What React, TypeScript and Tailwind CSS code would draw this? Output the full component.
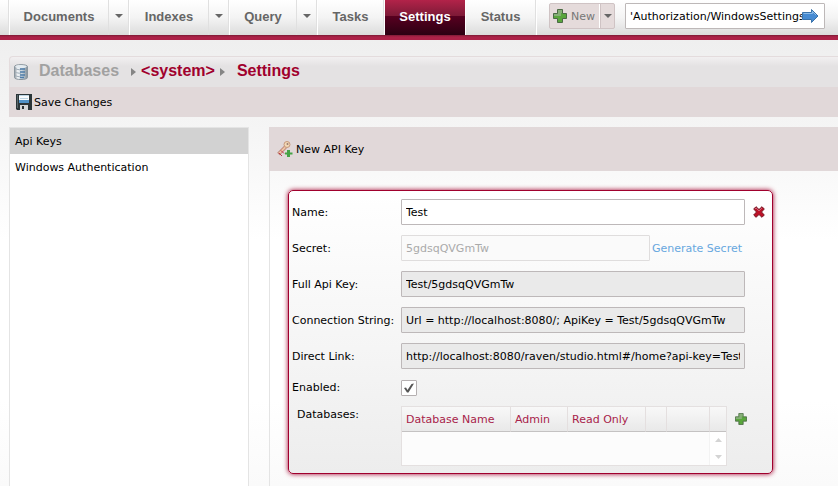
import { useState, type ReactNode } from "react";

function DownTriangle() {
  return (
    <svg width="8" height="4" viewBox="0 0 8 4" aria-hidden="true">
      <path d="M0 0h8L4 4z" fill="#666" />
    </svg>
  );
}

function Crumb() {
  return (
    <svg width="5" height="8" viewBox="0 0 5 8" aria-hidden="true">
      <path d="M0 0l5 4-5 4z" fill="#858585" />
    </svg>
  );
}

function PlusIcon({ size }: { size: number }) {
  return (
    <svg width={size} height={size} viewBox="0 0 14 14" aria-hidden="true">
      <path
        d="M4.5 .5h5v4h4v5h-4v4h-5v-4h-4v-5h4z"
        fill="#59a63c"
        stroke="#4b6b45"
      />
      <path d="M5 1h4v3H8v3H1V5h4z" fill="#a5b59e" opacity=".6" />
    </svg>
  );
}

function DatabaseIcon() {
  return (
    <svg width="14" height="16" viewBox="0 0 14 16" aria-hidden="true">
      <defs>
        <linearGradient id="drum">
          <stop offset="0" stopColor="#8e979e" />
          <stop offset=".25" stopColor="#f5f8fa" />
          <stop offset=".6" stopColor="#c3d0da" />
          <stop offset="1" stopColor="#828e97" />
        </linearGradient>
      </defs>
      <path
        d="M.5 2.500C.5 0 13.500 0 13.500 2.500v11c0 2.700-13 2.700-13 0z"
        fill="url(#drum)"
        stroke="#8b969e"
      />
      <ellipse cx="7" cy="2.600" rx="5.800" ry="1.600" fill="#e4ebf0" />
      <path
        d="M1 4.500c2 1 4 1.300 6 1.300M1 8c2 1 4 1.300 6 1.300M1 11.500c2 1 4 1.300 6 1.300"
        fill="none"
        stroke="#9fadb8"
      />
      <path d="M6 5h5M6 8h5M6 11h5M6 13.500h4" stroke="#4d7ca8" strokeWidth="1.500" />
    </svg>
  );
}

function SaveIcon() {
  return (
    <svg width="16" height="16" viewBox="0 0 16 16" aria-hidden="true">
      <path d="M0 0h16v16H1L0 15z" fill="#2b3538" />
      <path d="M1 1h1v13H1z" fill="#59676a" />
      <path d="M3 1h10v8H3z" fill="#f6fafc" />
      <path d="M3 1h10v1H3z" fill="#b9d2e2" />
      <path d="M4 4.500h8" stroke="#b9d2e2" />
      <path d="M3 6h10v3H3z" fill="#4f93c8" />
      <path d="M4 11h8v5H4z" fill="#d3d7d8" />
      <path d="M6 12h2v3H6z" fill="#273033" />
    </svg>
  );
}

function KeyIcon() {
  return (
    <svg width="16" height="16" viewBox="0 0 16 16" aria-hidden="true">
      <path d="M8.500 6L1.500 13" stroke="#b87a70" strokeWidth="3.500" />
      <path d="M8.500 6L2 12.500" stroke="#edc5a4" strokeWidth="2" />
      <path d="M2 12l3 3M4 9.500l3 3" stroke="#bd3348" />
      <circle cx="10" cy="3.500" r="3" fill="#f3d9b6" stroke="#c6987c" />
      <circle cx="10.500" cy="3" r="1" fill="#9a7b72" />
      <path d="M10 9h3v2.500h2.500v2H13V16h-3v-2.500H8v-2h2z" fill="#45a346" />
    </svg>
  );
}

function GoIcon() {
  return (
    <svg width="17" height="14" viewBox="0 0 17 14" aria-hidden="true">
      <path d="M.5 3.500h9v-3l6.500 6.500-6.500 6.500v-3h-9z" fill="#478bd2" stroke="#3972aa" />
      <path d="M1.500 4.500h9v-2L14 6" fill="none" stroke="#8dbce9" />
    </svg>
  );
}

function DeleteIcon() {
  return (
    <svg width="12" height="12" viewBox="0 0 12 12" aria-hidden="true">
      <path
        d="M3 .7L6 3.500 9 .7 11.300 3 8.500 6l2.800 3L9 11.300 6 8.500l-3 2.800L.7 9l2.800-3L.7 3z"
        fill="#bd1026"
        stroke="#761522"
      />
      <path d="M2 3l1-1 3 3 3-3" fill="none" stroke="#cf7488" opacity=".8" />
    </svg>
  );
}

function Tab({
  label,
  width,
  menu,
  active,
}: {
  label: string;
  width: string;
  menu?: boolean;
  active?: boolean;
}) {
  return (
    <div className="flex h-full border-r border-white">
      <button
        className={`${width} pb-[2px] text-center font-bold ${
          active
            ? "bg-[linear-gradient(#b22349_0%,#7d1a37_45%,#570020_46%,#2c0012_100%)] text-white"
            : "border-r border-[#e0e0e0] text-[#666]"
        }`}
      >
        {label}
      </button>
      {menu && (
        <button
          aria-label={`${label} menu`}
          className="flex w-5 items-center justify-center border-r border-[#e0e0e0] pb-[3px]"
        >
          <DownTriangle />
        </button>
      )}
    </div>
  );
}

const fieldBase = "h-[26px] rounded-[1px] border px-1 text-[11px] outline-none";

function Field({
  id,
  label,
  children,
}: {
  id: string;
  label: string;
  children: ReactNode;
}) {
  return (
    <div className="flex items-center">
      <label htmlFor={id} className="w-[109px] shrink-0 whitespace-nowrap">
        {label}
      </label>
      {children}
    </div>
  );
}

const readOnlyFields = [
  { id: "full", label: "Full Api Key:", value: "Test/5gdsqQVGmTw" },
  {
    id: "conn",
    label: "Connection String:",
    value: "Url = http://localhost:8080/; ApiKey = Test/5gdsqQVGmTw",
  },
  {
    id: "link",
    label: "Direct Link:",
    value: "http://localhost:8080/raven/studio.html#/home?api-key=Test/5gdsqQVGmTw",
  },
];

export default function App() {
  const [enabled, setEnabled] = useState(true);
  const [name, setName] = useState("Test");

  return (
    <div className="flex h-screen flex-col overflow-hidden bg-[linear-gradient(#efefef_40px,#f5f5f5_130px,#ffffff_240px,#ffffff_400px,#fafafa_486px)] font-['DejaVu_Sans',Verdana,sans-serif] text-[11px] leading-[17px] text-black">
      <nav className="flex h-10 shrink-0 border-b-[5px] border-[#ad2248] bg-[linear-gradient(#ffffff,#f4f4f4_50%,#dcdcdc)]">
        <div className="ml-2 flex h-full shrink-0 border-l border-[#e0e0e0] font-['Liberation_Sans',Arial,sans-serif] text-[13px]">
          <div className="border-l border-white" />
          <Tab label="Documents" width="w-[99px]" menu />
          <Tab label="Indexes" width="w-[79px]" menu />
          <Tab label="Query" width="w-[67px]" menu />
          <Tab label="Tasks" width="w-[66px]" />
          <Tab label="Settings" width="w-20" active />
          <Tab label="Status" width="w-[70px]" />
        </div>
        <div className="ml-3 mt-[3px] flex h-[26px] shrink-0 rounded-[2px] border border-[#cfc3c4] bg-[#e5dbdb] text-[#777]">
          <button className="flex w-[50px] items-center gap-1 border-r border-white pl-[3px]">
            <PlusIcon size={14} />
            New
          </button>
          <button
            aria-label="New menu"
            className="flex w-[14px] items-center justify-center border-l border-[#cfc3c4]"
          >
            <DownTriangle />
          </button>
        </div>
        <div className="ml-[10px] mr-[13px] mt-[3px] flex h-[26px] min-w-0 flex-1 items-center rounded-[1px] border border-[#bdb8b8] bg-white pl-1 pr-[5px]">
          <input
            aria-label="Address"
            defaultValue="'Authorization/WindowsSettings"
            className="h-full w-0 min-w-0 flex-1 bg-transparent outline-none"
          />
          <button aria-label="Go" className="shrink-0">
            <GoIcon />
          </button>
        </div>
      </nav>
      <div className="-mt-[5px] h-[5px] shrink-0 bg-[linear-gradient(#7c1b35,#ad2248_40%)]" />

      <header className="ml-[9px] mt-4 shrink-0">
        <div className="flex h-[31px] items-center rounded-tl border-l border-t border-[#e4dcdd] bg-[linear-gradient(#f2f0f1,#e4e2e3_30%)] pl-1 font-['Liberation_Sans',Arial,sans-serif] text-base font-bold text-[#a0002d]">
          <DatabaseIcon />
          <a href="#databases" className="ml-[11px] mr-3 pb-[2px] text-[#a1a1a1]">
            Databases
          </a>
          <Crumb />
          <a href="#system" className="ml-[5px] mr-[5px] pb-[2px]">
            &lt;system&gt;
          </a>
          <Crumb />
          <h1 className="ml-3 pb-[2px]">Settings</h1>
        </div>
        <div className="flex h-[30px] items-center bg-[#e1d8d9] pl-[7px]">
          <button className="flex items-center gap-[2px]">
            <SaveIcon />
            Save Changes
          </button>
        </div>
      </header>

      <main className="ml-[9px] mt-[10px] flex min-h-0 flex-1 gap-5">
        <aside className="flex w-60 shrink-0 flex-col border border-b-0 border-[#e4e4e4] bg-white">
          <button className="h-[26px] bg-[#d2d2d2] pl-[5px] text-left">Api Keys</button>
          <button className="h-[26px] pl-[5px] text-left">Windows Authentication</button>
        </aside>

        <section className="flex min-w-0 flex-1 flex-col">
          <div className="flex h-11 shrink-0 items-center bg-[#e1d8d9] pl-2">
            <button className="flex items-center gap-[3px]">
              <KeyIcon />
              New API Key
            </button>
          </div>
          <div className="flex-1 border-l border-[#e4e4e4] pl-[18px] pt-[19px]">
            <form className="flex w-[485px] flex-col gap-[10px] rounded-[5px] border border-[#a0002d] bg-[linear-gradient(#ffffff,#ededed)] pb-[7px] pl-[3px] pt-2 shadow-[0_0_5px_#a0002d]">
              <Field id="name" label="Name:">
                <input
                  id="name"
                  value={name}
                  onChange={(e) => setName(e.target.value)}
                  className={`${fieldBase} w-[344px] border-[#bdb8b9] bg-white`}
                />
                <button type="button" aria-label="Delete key" className="ml-2">
                  <DeleteIcon />
                </button>
              </Field>
              <Field id="secret" label="Secret:">
                <input
                  id="secret"
                  disabled
                  value="5gdsqQVGmTw"
                  className={`${fieldBase} w-[249px] border-[#dfdddd] bg-[#fafafa] text-[#aaa]`}
                />
                <a href="#generate" className="ml-[2px] text-[#68a8df]">
                  Generate Secret
                </a>
              </Field>
              {readOnlyFields.map((f) => (
                <Field key={f.id} id={f.id} label={f.label}>
                  <input
                    id={f.id}
                    readOnly
                    value={f.value}
                    className={`${fieldBase} w-[344px] border-[#bdb8b9] bg-[#eaeaea]`}
                  />
                </Field>
              ))}
              <Field id="enabled" label="Enabled:">
                <span className="relative flex size-4">
                  <input
                    id="enabled"
                    type="checkbox"
                    checked={enabled}
                    onChange={(e) => setEnabled(e.target.checked)}
                    className="w-4 flex-1 appearance-none rounded-[1px] border border-[#b5b0b1] bg-white"
                  />
                  {enabled && (
                    <svg
                      className="pointer-events-none absolute inset-0"
                      width="16"
                      height="16"
                      viewBox="0 0 16 16"
                      aria-hidden="true"
                    >
                      <path d="M3 8l2-.5L6.500 10l4-6 2.500-.5L7.500 12.500H6z" fill="#555" />
                    </svg>
                  )}
                </span>
              </Field>
              <div className="flex">
                <span id="databases-label" className="w-[109px] shrink-0 pl-[5px]">
                  Databases:
                </span>
                <div className="w-[326px] border border-[#e4e0e0] bg-[#fcfcfc]">
                  <table
                    aria-labelledby="databases-label"
                    className="w-full table-fixed border-separate border-spacing-0 text-left text-[#a8234a]"
                  >
                    <thead>
                      <tr className="bg-[linear-gradient(#f8f8f8,#e8e8e8)] [&>*]:h-[25px] [&>*]:border-b [&>*]:border-b-[#c4c2c2] [&>*]:border-r-[#e4dfdf] [&>*]:py-0">
                        <th className="w-[109px] border-r pl-1 font-normal">
                          Database Name
                        </th>
                        <th className="w-[57px] border-r pl-1 font-normal">Admin</th>
                        <th className="w-[78px] border-r pl-1 font-normal">
                          Read Only
                        </th>
                        <td className="w-[21px] border-r" />
                        <td className="w-[43px] border-r" />
                        <td />
                      </tr>
                    </thead>
                  </table>
                  <div className="flex h-[33px] justify-end">
                    <div className="flex w-[17px] flex-col items-center justify-between border-l border-[#f3f3f3] bg-white py-[6px]">
                      <svg width="7" height="4" viewBox="0 0 7 4" aria-hidden="true">
                        <path d="M0 4h7L3.500 0z" fill="#d4d4d4" />
                      </svg>
                      <svg width="7" height="4" viewBox="0 0 7 4" aria-hidden="true">
                        <path d="M0 0h7L3.500 4z" fill="#d4d4d4" />
                      </svg>
                    </div>
                  </div>
                </div>
                <button
                  type="button"
                  aria-label="Add database"
                  className="ml-2 mt-[7px] self-start"
                >
                  <PlusIcon size={12} />
                </button>
              </div>
            </form>
          </div>
        </section>
      </main>
    </div>
  );
}
